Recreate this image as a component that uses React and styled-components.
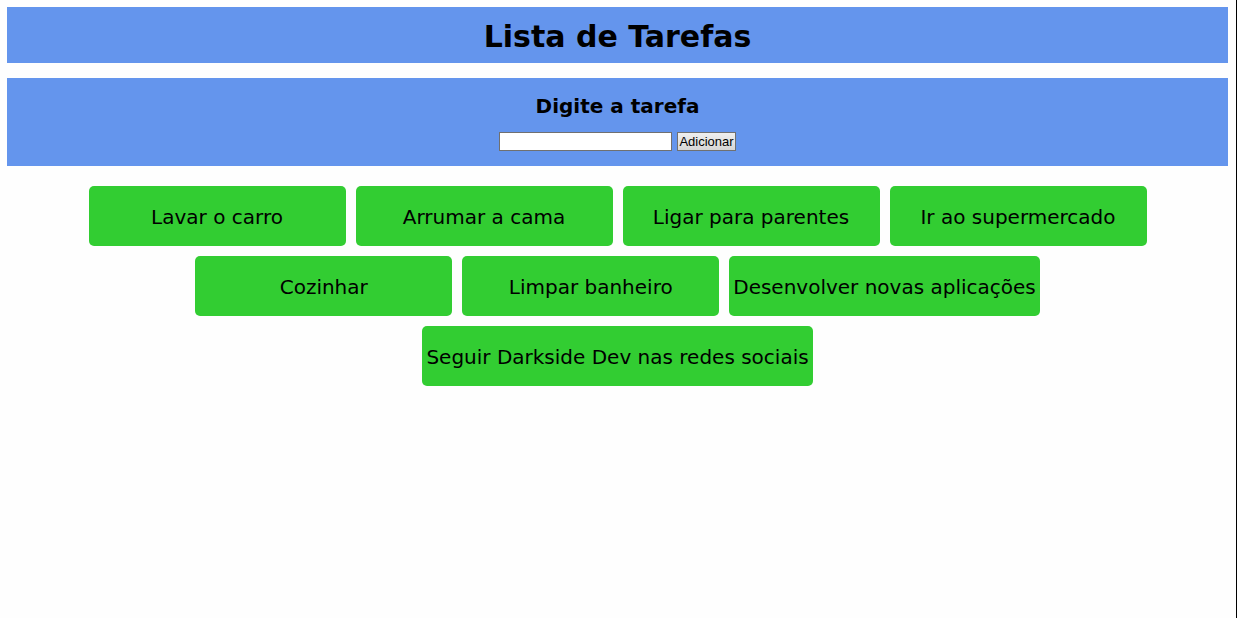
import React, { useState } from "react";
import styled, { createGlobalStyle } from "styled-components";

const GlobalStyle = createGlobalStyle`
  *, *::before, *::after { box-sizing: border-box; }
  body {
    margin: 0;
    background: #fefefe;
    color: #000;
    font-family: Verdana, "DejaVu Sans", sans-serif;
  }
`;

const Page = styled.main`
  display: flex;
  flex-direction: column;
  min-height: 100vh;
  padding: 7px 8px 7px 7px;
  border-right: 1px solid #000;
`;

const Header = styled.header`
  padding: 10px 10px 6px;
  margin-bottom: 15px;
  background: cornflowerblue;
  text-align: center;
`;

const Title = styled.h1`
  margin: 0;
  font-size: 30px;
  line-height: 40px;
`;

const TaskForm = styled.form`
  display: flex;
  flex-direction: column;
  align-items: center;
  gap: 13px;
  padding: 16px 15px 15px;
  margin-bottom: 20px;
  background: cornflowerblue;
`;

const Label = styled.label`
  font-size: 20px;
  font-weight: bold;
  line-height: 25px;
`;

const Controls = styled.div`
  display: flex;
  gap: 5px;
`;

const TextInput = styled.input`
  width: 173px;
  height: 19px;
  padding: 1px;
  border: 1px solid #707070;
  border-radius: 0;
  background: #fff;
  font: 13px "Liberation Sans", Arial, sans-serif;
`;

const AddButton = styled.button`
  height: 19px;
  padding: 0 1px;
  border: 1px solid #707070;
  border-radius: 0;
  background: linear-gradient(#efefef, #d6d6d6);
  color: #000;
  font: 13px "Liberation Sans", Arial, sans-serif;
  line-height: 17px;
`;

const TaskList = styled.ul`
  display: flex;
  flex-wrap: wrap;
  justify-content: center;
  gap: 10px;
  margin: 0;
  padding: 0;
  list-style: none;
`;

const Task = styled.li`
  min-width: 257px;
  padding: 2px 4px 0;
  border-radius: 5px;
  background: limegreen;
  font-size: 20px;
  line-height: 58px;
  text-align: center;
`;

const initialTasks = [
  "Lavar o carro",
  "Arrumar a cama",
  "Ligar para parentes",
  "Ir ao supermercado",
  "Cozinhar",
  "Limpar banheiro",
  "Desenvolver novas aplicações",
  "Seguir Darkside Dev nas redes sociais",
];

export default function App() {
  const [tasks, setTasks] = useState(initialTasks);
  const [text, setText] = useState("");

  const addTask = (event) => {
    event.preventDefault();
    if (!text.trim()) return;
    setTasks([...tasks, text.trim()]);
    setText("");
  };

  return (
    <>
      <GlobalStyle />
      <Page>
        <Header>
          <Title>Lista de Tarefas</Title>
        </Header>
        <TaskForm onSubmit={addTask}>
          <Label htmlFor="task">Digite a tarefa</Label>
          <Controls>
            <TextInput
              id="task"
              type="text"
              autoComplete="off"
              value={text}
              onChange={(event) => setText(event.target.value)}
            />
            <AddButton type="submit">Adicionar</AddButton>
          </Controls>
        </TaskForm>
        <TaskList>
          {tasks.map((task, index) => (
            <Task key={index}>{task}</Task>
          ))}
        </TaskList>
      </Page>
    </>
  );
}
